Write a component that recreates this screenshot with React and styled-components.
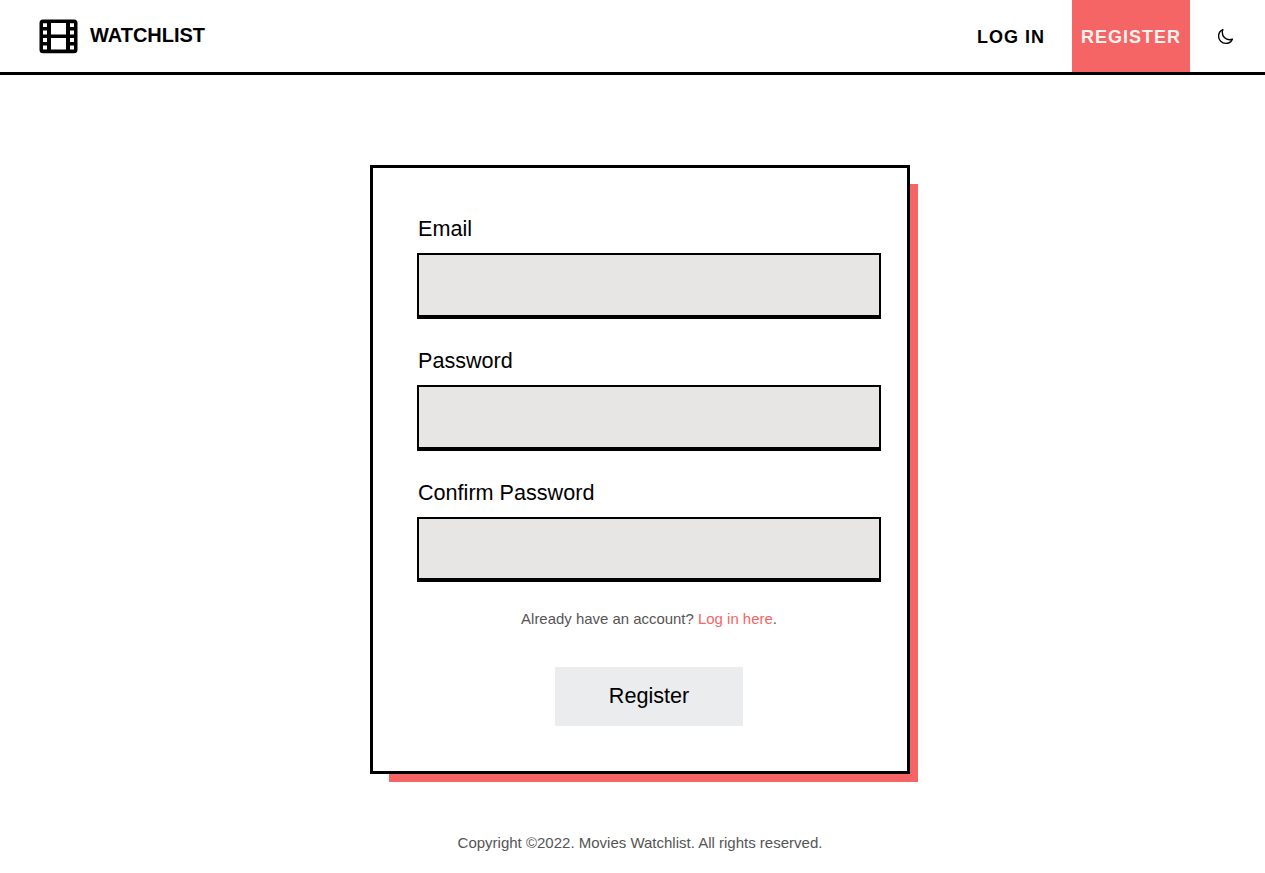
import React from "react";
import styled, { createGlobalStyle } from "styled-components";
import { IoMoonOutline } from "react-icons/io5";

const coral = "#f66565";

const GlobalStyle = createGlobalStyle`
  *, *::before, *::after { box-sizing: border-box; }
  body {
    margin: 0;
    background: #fff;
    color: #000;
    font-family: "Liberation Sans", Arial, Helvetica, sans-serif;
  }
`;

const Page = styled.div`
  display: flex;
  flex-direction: column;
  min-height: 873px;
`;

const Header = styled.header`
  display: flex;
  justify-content: space-between;
  height: 75px;
  padding: 0 31px 0 39px;
  border-bottom: 3px solid #000;
`;

const Brand = styled.a`
  display: flex;
  align-items: center;
  gap: 12px;
  color: #000;
  font-size: 20px;
  font-weight: 700;
  line-height: 24px;
  text-decoration: none;
`;

const BrandName = styled.span`
  width: 116px;
  margin-top: -2px;
  letter-spacing: -0.02px;
  white-space: nowrap;
`;

const Nav = styled.nav`
  display: flex;
`;

const NavLink = styled.a`
  display: flex;
  align-items: center;
  justify-content: center;
  width: ${(p) => (p.$active ? "118px" : "122px")};
  padding: 2px 0 0 0;
  background: ${(p) => (p.$active ? coral : "transparent")};
  color: ${(p) => (p.$active ? "#fff2ef" : "#000")};
  font-size: 18px;
  font-weight: 700;
  letter-spacing: 1px;
  text-decoration: none;
  white-space: nowrap;
`;

const ThemeButton = styled.button`
  display: flex;
  align-items: center;
  margin-left: 26px;
  padding: 0 0 0 1px;
  border: 0;
  background: none;
  color: #000;

  svg path {
    stroke-width: 42px;
  }
`;

const Main = styled.main`
  display: flex;
  justify-content: center;
  padding: 90px 0 0 15px;
`;

const Card = styled.form`
  display: flex;
  flex-direction: column;
  width: 540px;
  height: 609px;
  padding: 46px 26px 0 44px;
  border: 3px solid #000;
  background: #fff;
  box-shadow: 13.5px 13.5px 0 -5.5px ${coral};
`;

const Field = styled.label`
  display: flex;
  flex-direction: column;
  height: 132px;
`;

const FieldName = styled.span`
  height: 39px;
  padding: 2px 0 0 1px;
  font-size: 21.6px;
  line-height: 26px;
`;

const Input = styled.input`
  width: 464px;
  height: ${(p) => p.$height || 66}px;
  padding: 0 16px;
  border: 2px solid #000;
  border-bottom-width: 4px;
  border-radius: 0;
  outline: 0;
  background: #e7e6e4;
  font: inherit;
  font-size: 20px;
`;

const Hint = styled.p`
  margin: 0;
  color: #555;
  font-size: 14.95px;
  line-height: 18px;
  text-align: center;
`;

const HintLink = styled.a`
  color: ${coral};
  text-decoration: none;
`;

const Submit = styled.button`
  align-self: center;
  width: 188px;
  height: 59px;
  margin-top: 39px;
  padding: 0 0 2px;
  border: 0;
  background: #ebecee;
  color: #000;
  font-family: inherit;
  font-size: 21.6px;
`;

const Footer = styled.footer`
  padding: 60px 0 0 15px;
  color: #555;
  font-size: 15px;
  line-height: 18px;
  text-align: center;
`;

const FilmIcon = () => (
  <svg width="39" height="35" viewBox="0 0 39 35" fill="#000" fillRule="evenodd" aria-hidden="true">
    <path d="M4 .4H35Q38.5.4 38.5 3.9V30.8Q38.5 34.3 35 34.3H4Q.5 34.3.5 30.8V3.9Q.5.4 4 .4ZM4 4.2V8H8V4.2ZM4 11.6V15.4H8V11.6ZM4 19V23H8V19ZM4 26.6V30.5H8V26.6ZM12 4V15.4H27V4ZM12 19V30.5H27V19ZM31 4.2V8H35V4.2ZM31 11.6V15.4H35V11.6ZM31 19V23H35V19ZM31 26.6V30.5H35V26.6Z" />
  </svg>
);

const fields = [
  { name: "email", label: "Email", type: "email" },
  { name: "password", label: "Password", type: "password" },
  { name: "confirm", label: "Confirm Password", type: "password", height: 65 },
];

export default function App() {
  return (
    <Page>
      <GlobalStyle />
      <Header>
        <Brand>
          <FilmIcon />
          <BrandName>WATCHLIST</BrandName>
        </Brand>
        <Nav>
          <NavLink>LOG IN</NavLink>
          <NavLink $active>REGISTER</NavLink>
          <ThemeButton type="button" aria-label="Toggle theme">
            <IoMoonOutline size={17} />
          </ThemeButton>
        </Nav>
      </Header>
      <Main>
        <Card>
          {fields.map((f) => (
            <Field key={f.name}>
              <FieldName>{f.label}</FieldName>
              <Input type={f.type} name={f.name} $height={f.height} />
            </Field>
          ))}
          <Hint>
            Already have an account? <HintLink>Log in here</HintLink>.
          </Hint>
          <Submit type="button">Register</Submit>
        </Card>
      </Main>
      <Footer>Copyright ©2022. Movies Watchlist. All rights reserved.</Footer>
    </Page>
  );
}
